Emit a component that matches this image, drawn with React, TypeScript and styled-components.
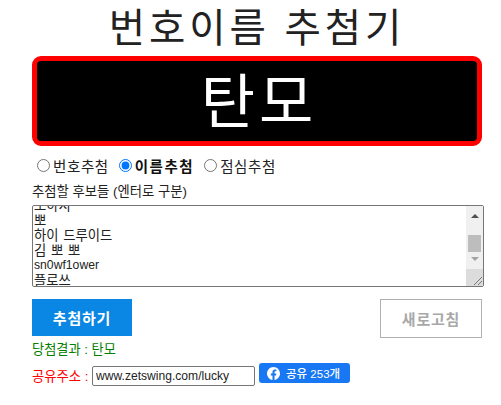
import React, { useEffect, useRef } from "react";
import styled, { createGlobalStyle } from "styled-components";

const candidates = ["모하지", "뽀", "하이 드루이드", "김 뽀 뽀", "sn0wf1ower", "플로쓰"];

const GlobalStyle = createGlobalStyle`
  html, body {
    margin: 0;
    padding: 0;
    background: #fff;
    font-family: "Liberation Sans", "Noto Sans CJK KR", sans-serif;
  }
`;

const Page = styled.div`
  width: 450px;
  margin-left: 32px;
  padding-top: 5px;
`;

const Title = styled.h1`
  margin: 0;
  height: 51px;
  line-height: 46px;
  font-size: 39.5px;
  font-weight: 400;
  letter-spacing: 3.9px;
  text-align: center;
  color: #222;
`;

const Display = styled.div`
  box-sizing: border-box;
  height: 90px;
  padding: 5px 0 0 4px;
  border: 5px solid #f00;
  border-radius: 9px;
  background: #000;
  color: #fff;
  font-size: 59px;
  letter-spacing: 4px;
  line-height: 75px;
  text-align: center;
`;

const ModeRow = styled.div`
  display: flex;
  align-items: center;
  height: 20px;
  margin-top: 9px;
  padding-left: 5px;
  gap: 10px;
`;

const ModeLabel = styled.label<{ $active?: boolean }>`
  display: flex;
  align-items: center;
  font-size: 14.5px;
  letter-spacing: ${(p) => (p.$active ? "1.5px" : "0.6px")};
  color: ${(p) => (p.$active ? "#111" : "#222")};
  font-weight: ${(p) => (p.$active ? 700 : 400)};
`;

const Radio = styled.input`
  width: 13px;
  height: 13px;
  margin: 0 3px 0 0;
`;

const Hint = styled.div`
  margin-top: 8px;
  height: 18px;
  line-height: 18px;
  font-size: 13.33px;
  color: #222;
`;

const Box = styled.div`
  display: flex;
  box-sizing: border-box;
  width: 452px;
  height: 82px;
  margin-top: 4px;
  border: 1px solid #767676;
  border-radius: 2px;
  overflow: hidden;
`;

const Candidates = styled.div`
  flex: 1;
  min-width: 0;
  padding: 0 1px;
  overflow: hidden;
  color: #222;
`;

const Candidate = styled.div<{ $latin?: boolean }>`
  height: 15px;
  line-height: 15px;
  font-size: ${(p) => (p.$latin ? "12.2px" : "13.33px")};
  word-spacing: 1px;
`;

const Scrollbar = styled.div`
  display: flex;
  flex-direction: column;
  align-items: center;
  width: 17px;
  background: #f0f0f0;
`;

const Arrow = styled.div<{ $down?: boolean }>`
  width: 0;
  height: 0;
  margin-top: ${(p) => (p.$down ? "5px" : "8px")};
  border-left: 4px solid transparent;
  border-right: 4px solid transparent;
  ${(p) =>
    p.$down ? "border-top: 4px solid #a3a3a3;" : "border-bottom: 4px solid #505050;"}
`;

const Thumb = styled.div`
  width: 13px;
  height: 17px;
  margin-top: 17px;
  background: #bdbdbd;
`;

const Grip = styled.div`
  margin-top: auto;
  width: 100%;
  height: 17px;
  background: #dcdcdc;
  display: flex;
`;

const Actions = styled.div`
  display: flex;
  justify-content: space-between;
  align-items: flex-start;
  margin-top: 12px;
`;

const DrawButton = styled.button`
  width: 100px;
  height: 37px;
  padding: 0;
  border: none;
  background: #0a87e4;
  color: #fff;
  font-family: inherit;
  font-size: 15px;
  letter-spacing: 0.8px;
  font-weight: 700;
`;

const ResetButton = styled.button`
  box-sizing: border-box;
  width: 102px;
  height: 39px;
  padding: 0;
  border: 1px solid #b0b0b0;
  background: #fff;
  color: #a8a8a8;
  font-family: inherit;
  font-size: 15px;
  letter-spacing: 0.8px;
  font-weight: 700;
`;

const Result = styled.div`
  height: 20px;
  line-height: 20px;
  margin-top: 2px;
  font-size: 13.2px;
  color: #008000;
`;

const ShareRow = styled.div`
  display: flex;
  align-items: flex-start;
  margin-top: 2px;
`;

const ShareLabel = styled.span`
  width: 60px;
  font-size: 13.33px;
  line-height: 30px;
  color: #f00;
`;

const Url = styled.input`
  box-sizing: border-box;
  width: 163px;
  height: 20px;
  margin-top: 4px;
  padding: 0 3px;
  border: 1px solid #767676;
  border-radius: 2px;
  font-family: "Liberation Sans", sans-serif;
  font-size: 12.1px;
  color: #222;
`;

const ShareButton = styled.a`
  display: flex;
  align-items: center;
  gap: 6px;
  box-sizing: border-box;
  width: 91px;
  height: 20px;
  margin: 1px 0 0 4px;
  padding-left: 8px;
  border-radius: 3px;
  background: #1877f2;
  color: #fff;
  font-size: 11.5px;
  font-weight: 500;
`;

const App = () => {
  const boxRef = useRef<HTMLDivElement>(null);

  useEffect(() => {
    if (boxRef.current) boxRef.current.scrollTop = 8;
  }, []);

  return (
    <Page>
      <GlobalStyle />
      <Title>번호이름 추첨기</Title>
      <Display>탄모</Display>
      <ModeRow>
        <ModeLabel>
          <Radio type="radio" name="mode" />
          번호추첨
        </ModeLabel>
        <ModeLabel $active>
          <Radio type="radio" name="mode" defaultChecked />
          이름추첨
        </ModeLabel>
        <ModeLabel>
          <Radio type="radio" name="mode" />
          점심추첨
        </ModeLabel>
      </ModeRow>
      <Hint>추첨할 후보들 (엔터로 구분)</Hint>
      <Box>
        <Candidates ref={boxRef}>
          {candidates.map((name) => (
            <Candidate key={name} $latin={/^[a-z0-9]+$/i.test(name)}>
              {name}
            </Candidate>
          ))}
        </Candidates>
        <Scrollbar>
          <Arrow />
          <Thumb />
          <Arrow $down />
          <Grip>
            <svg width="17" height="17" viewBox="0 0 17 17">
              <path d="M8 16 L16 8 M12 16 L16 12" stroke="#777" strokeWidth="1" fill="none" />
            </svg>
          </Grip>
        </Scrollbar>
      </Box>
      <Actions>
        <DrawButton>추첨하기</DrawButton>
        <ResetButton>새로고침</ResetButton>
      </Actions>
      <Result>당첨결과 : 탄모</Result>
      <ShareRow>
        <ShareLabel>공유주소 :</ShareLabel>
        <Url readOnly value="www.zetswing.com/lucky" />
        <ShareButton>
          <svg width="13" height="13" viewBox="0 0 24 24">
            <path
              fill="#fff"
              d="M24 12.07C24 5.4 18.63 0 12 0S0 5.4 0 12.07c0 6.03 4.39 11.02 10.13 11.93v-8.44H7.08v-3.49h3.05V9.41c0-3.02 1.79-4.69 4.53-4.69 1.31 0 2.68.24 2.68.24v2.97h-1.51c-1.49 0-1.96.93-1.96 1.89v2.25h3.33l-.53 3.49h-2.8V24C19.61 23.09 24 18.1 24 12.07z"
            />
          </svg>
          공유 253개
        </ShareButton>
      </ShareRow>
    </Page>
  );
};

export default App;
